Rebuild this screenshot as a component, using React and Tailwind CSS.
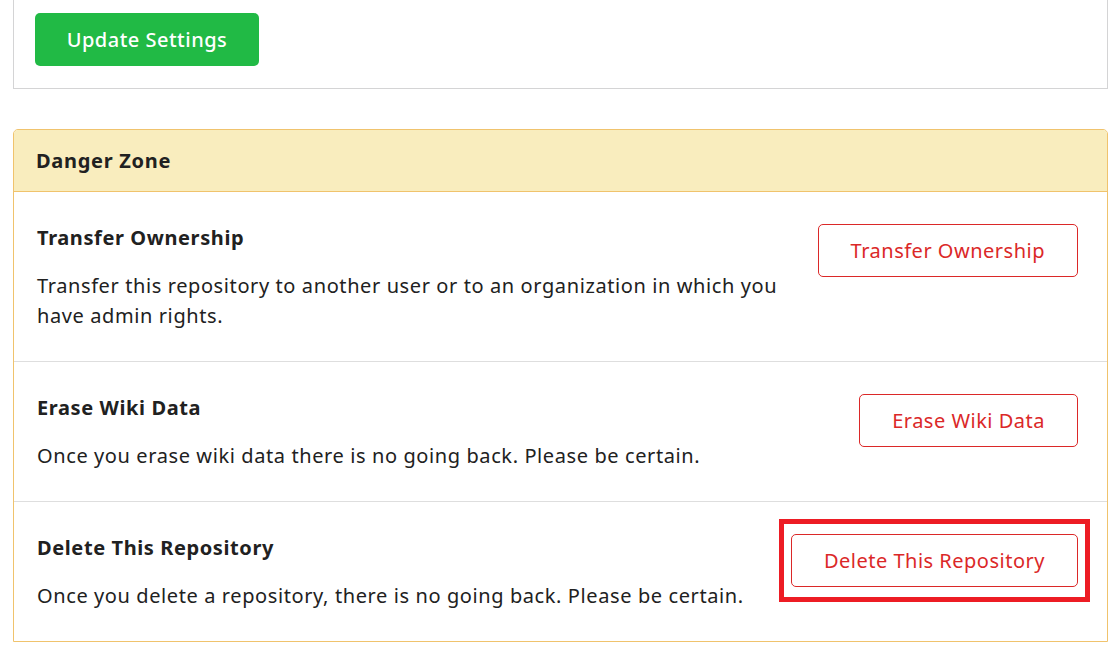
import React from 'react';

const sections = [
  {
    id: 'transfer',
    title: 'Transfer Ownership',
    text: 'Transfer this repository to another user or to an organization in which you have admin rights.',
    action: 'Transfer Ownership',
  },
  {
    id: 'wiki',
    title: 'Erase Wiki Data',
    text: 'Once you erase wiki data there is no going back. Please be certain.',
    action: 'Erase Wiki Data',
  },
  {
    id: 'delete',
    title: 'Delete This Repository',
    text: 'Once you delete a repository, there is no going back. Please be certain.',
    action: 'Delete This Repository',
    highlight: true,
  },
];

const DangerButton = ({ label, highlight }) => (
  <div className="relative shrink-0">
    <button className="h-[53px] px-[32px] rounded-[5px] border border-[#db2828] bg-white text-[#db2828] text-[20px] tracking-[0.5px] leading-none whitespace-nowrap">
      {label}
    </button>
    {highlight && (
      <span className="absolute -left-[12px] -right-[12px] -top-[15px] -bottom-[15px] border-[5px] border-[#ed1c24] pointer-events-none"></span>
    )}
  </div>
);

const App = () => {
  return (
    <div
      className="w-[1119px] h-[660px] overflow-hidden bg-white text-[#212121]"
      style={{ fontFamily: '"Noto Sans", "Open Sans", sans-serif' }}
    >
      <div className="ml-[13px] w-[1095px]">
        {/* settings panel, top edge scrolled out of view */}
        <div className="border-x border-b border-[#d4d4d5] pt-[13px] pb-[22px] pl-[21px]">
          <button className="h-[53px] w-[224px] rounded-[5px] bg-[#21ba45] text-white text-[20px] tracking-[0.5px] font-medium leading-none">
            Update Settings
          </button>
        </div>

        {/* danger zone */}
        <div className="mt-[40px] border border-[#f0c36d] rounded-t-[5px]">
          <div className="h-[62px] bg-[#f9edbe] border-b border-[#f0c36d] flex items-center pl-[22px] rounded-t-[4px]">
            <h2 className="text-[20px] font-bold tracking-[0.7px]">Danger Zone</h2>
          </div>
          {sections.map((s, i) => (
            <div
              key={s.id}
              className={`flex items-start justify-between gap-[30px] pt-[32px] pr-[29px] pb-[30px] pl-[23px] ${
                i > 0 ? 'border-t border-[#dedede]' : ''
              }`}
            >
              <div className="flex-1">
                <h3 className="text-[20px] font-bold tracking-[0.6px] leading-[28px]">{s.title}</h3>
                <p className="mt-[19px] text-[20px] tracking-[0.6px] leading-[30px]">{s.text}</p>
              </div>
              <DangerButton label={s.action} highlight={s.highlight} />
            </div>
          ))}
        </div>
      </div>
    </div>
  );
};

export default App;
